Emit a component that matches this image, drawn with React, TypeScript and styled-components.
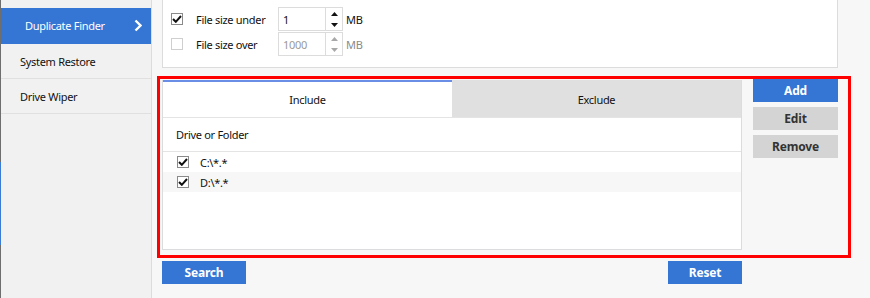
import React, { useState } from "react";
import styled, { createGlobalStyle } from "styled-components";

const Global = createGlobalStyle`
  html, body { margin: 0; padding: 0; }
  body { font-family: "Noto Sans", "Open Sans", sans-serif; font-size: 11px; letter-spacing: -0.3px; color: #111; background: #f7f7f7; }
`;

const Page = styled.div`display: flex; width: 870px; height: 298px; overflow: hidden; background: #f7f7f7;`;

const Rail = styled.div`width: 1px; display: flex; flex-direction: column; background: #6e6e6e;`;
const RailMark = styled.div`height: 83px; margin-top: 162px; background: #3a7bd5;`;

const Side = styled.div`width: 150px; border-right: 1px solid #dcdcdc; background: #f1f1f1; padding-top: 8px; box-sizing: content-box;`;
const SideItem = styled.div<{ $active?: boolean }>`
  height: 35px; box-sizing: border-box; display: flex; align-items: center; justify-content: space-between;
  padding: 0 9px 0 ${p => (p.$active ? "24px" : "19px")};
  background: ${p => (p.$active ? "#3575d3" : "transparent")};
  color: ${p => (p.$active ? "#fff" : "#111")};
  border-bottom: 1px solid ${p => (p.$active ? "#3575d3" : "#e0e0e0")};
  ${p => p.$active && "height: 36px;"}
`;

const Main = styled.div`flex: 1; display: flex; flex-direction: column;`;

const TopPanel = styled.div`
  margin: 0 32px 0 10px; background: #fff; border: 1px solid #dcdcdc; border-top: none;
  padding: 7px 8px 11px; display: flex; flex-direction: column; gap: 1px;
`;
const OptRow = styled.div`display: flex; align-items: center; height: 24px;`;
const Check = styled.span<{ $on?: boolean }>`
  width: 12px; height: 12px; box-sizing: border-box; border: 1px solid ${p => (p.$on ? "#8a8a8a" : "#cfcfcf")};
  background: #fff; display: inline-flex; align-items: center; justify-content: center; flex: none;
`;
const OptLabel = styled.span`margin-left: 13px; width: 82px;`;
const Spin = styled.div<{ $off?: boolean }>`
  width: 65px; height: 24px; box-sizing: border-box; border: 1px solid #dcdcdc; display: flex; background: #fff;
  color: ${p => (p.$off ? "#9a9a9a" : "#111")};
`;
const SpinValue = styled.div`flex: 1; padding: 4px 0 0 4px;`;
const SpinArrows = styled.div`width: 16px; border-left: 1px solid #dcdcdc; display: flex; flex-direction: column;`;
const SpinBtn = styled.div`flex: 1; display: flex; align-items: center; justify-content: center;`;
const Unit = styled.span<{ $off?: boolean }>`margin-left: 3px; color: ${p => (p.$off ? "#8a8a8a" : "#111")};`;

const Frame = styled.div`
  margin: 8px 19px 0 5px; border: 3px solid #ff0000; padding: 0 10px 5px 2px; display: flex; gap: 11px;
  background: #f7f7f7;
`;
const TabBox = styled.div`width: 580px; height: 170px; box-sizing: border-box; margin-top: 1px; border: 1px solid #dcdcdc; border-top: none; background: #fff; display: flex; flex-direction: column;`;
const TabBar = styled.div`display: flex; height: 37px; border-bottom: 1px solid #e4e4e4;`;
const Tab = styled.div<{ $active?: boolean }>`
  flex: 1; display: flex; align-items: center; justify-content: center; cursor: pointer;
  background: ${p => (p.$active ? "#fff" : "#e0e0e0")};
  border-top: 2px solid ${p => (p.$active ? "#6a8de6" : "#e0e0e0")};
`;
const ListHead = styled.div`height: 33px; display: flex; align-items: center; padding-left: 13px; border-bottom: 1px solid #e4e4e4;`;
const ListRow = styled.div<{ $alt?: boolean }>`height: 20px; display: flex; align-items: center; padding-left: 14px; background: ${p => (p.$alt ? "#f7f7f7" : "#fff")};`;
const RowText = styled.span`margin-left: 11px;`;

const BtnCol = styled.div`display: flex; flex-direction: column; gap: 5px; width: 85px;`;
const Btn = styled.button<{ $primary?: boolean; $w?: number }>`
  height: 23px; width: ${p => (p.$w ? `${p.$w}px` : "100%")}; border: none; padding: 0; cursor: pointer;
  font-family: "Noto Sans", "Open Sans", sans-serif; font-size: 12px; font-weight: 700; letter-spacing: -0.2px;
  background: ${p => (p.$primary ? "#3575d3" : "#d4d4d4")};
  color: ${p => (p.$primary ? "#fff" : "#333")};
`;
const BottomRow = styled.div`margin: 3px 0 0 10px; width: 580px; display: flex; justify-content: space-between;`;

const Tick = () => (
  <svg width="10" height="8" viewBox="0 0 10 8"><polyline points="1,4 3.8,6.8 9,1" fill="none" stroke="#111" strokeWidth="2" /></svg>
);

const Tri = ({ up, off }: { up?: boolean; off?: boolean }) => (
  <svg width="7" height="4" viewBox="0 0 7 4">
    <polygon points={up ? "0,4 3.5,0 7,4" : "0,0 7,0 3.5,4"} fill={off ? "#a8a8a8" : "#111"} />
  </svg>
);

const Chevron = () => (
  <svg width="8" height="13" viewBox="0 0 8 13"><polyline points="1.5,1.5 6.5,6.5 1.5,11.5" fill="none" stroke="#fff" strokeWidth="2.4" /></svg>
);

const App = () => {
  const [tab, setTab] = useState(0);
  return (
    <Page>
      <Global />
      <Rail><RailMark /></Rail>
      <Side>
        <SideItem $active>Duplicate Finder <Chevron /></SideItem>
        <SideItem>System Restore</SideItem>
        <SideItem>Drive Wiper</SideItem>
      </Side>
      <Main>
        <TopPanel>
          <OptRow>
            <Check $on><Tick /></Check>
            <OptLabel>File size under</OptLabel>
            <Spin>
              <SpinValue>1</SpinValue>
              <SpinArrows><SpinBtn><Tri up /></SpinBtn><SpinBtn><Tri /></SpinBtn></SpinArrows>
            </Spin>
            <Unit>MB</Unit>
          </OptRow>
          <OptRow>
            <Check />
            <OptLabel>File size over</OptLabel>
            <Spin $off>
              <SpinValue>1000</SpinValue>
              <SpinArrows><SpinBtn><Tri up off /></SpinBtn><SpinBtn><Tri off /></SpinBtn></SpinArrows>
            </Spin>
            <Unit $off>MB</Unit>
          </OptRow>
        </TopPanel>
        <Frame>
          <TabBox>
            <TabBar>
              <Tab $active={tab === 0} onClick={() => setTab(0)}>Include</Tab>
              <Tab $active={tab === 1} onClick={() => setTab(1)}>Exclude</Tab>
            </TabBar>
            <ListHead>Drive or Folder</ListHead>
            <ListRow><Check $on><Tick /></Check><RowText>C:\*.*</RowText></ListRow>
            <ListRow $alt><Check $on><Tick /></Check><RowText>D:\*.*</RowText></ListRow>
          </TabBox>
          <BtnCol>
            <Btn $primary>Add</Btn>
            <Btn>Edit</Btn>
            <Btn>Remove</Btn>
          </BtnCol>
        </Frame>
        <BottomRow>
          <Btn $primary $w={84}>Search</Btn>
          <Btn $primary $w={74}>Reset</Btn>
        </BottomRow>
      </Main>
    </Page>
  );
};

export default App;
